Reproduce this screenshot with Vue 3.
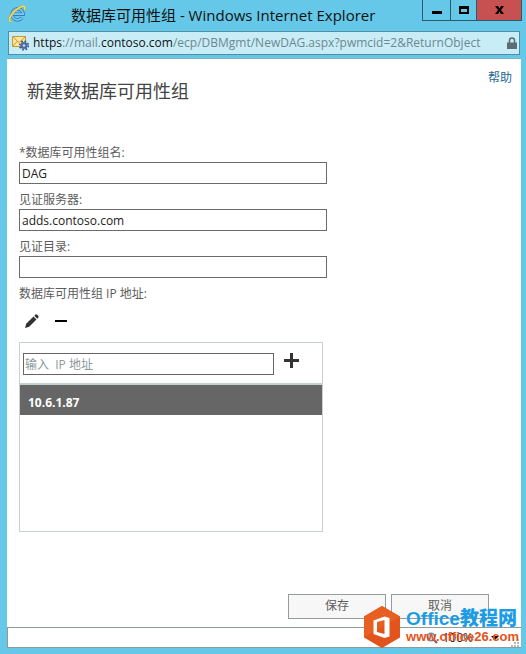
<script setup>
import { ref } from 'vue'

const groupName = ref('DAG')
const witnessServer = ref('adds.contoso.com')
const witnessDirectory = ref('')
const newAddress = ref('')
const addresses = ref(['10.6.1.87'])
const selected = ref(0)

function addAddress() {
  const value = newAddress.value.trim()
  if (value) {
    addresses.value.push(value)
    newAddress.value = ''
  }
}

function removeAddress() {
  addresses.value.splice(selected.value, 1)
  selected.value = 0
}

function editAddress() {
  newAddress.value = addresses.value[selected.value] || ''
}
</script>

<template>
  <div class="window">
    <header class="titlebar">
      <svg class="ie" viewBox="0 0 18 18" aria-hidden="true">
        <path d="M5 9.200h10.200a5.600 5.600 0 1 0-1.200 3.600" fill="none" stroke="#2f7fb8" stroke-width="3.400" />
        <path d="M5 9.200h10.200a5.600 5.600 0 1 0-1.200 3.600" fill="none" stroke="#7fcbf0" stroke-width="1.800" />
        <path d="M3.600 16.200C.6 17.400.600 13.500 4 9 8 3.800 14.500.200 16.400 1.600c.9.700.5 2.200-.2 3.500" fill="none" stroke="#b89a34" stroke-width="2.200" />
        <path d="M3.600 16.200C.6 17.400.600 13.500 4 9 8 3.800 14.500.200 16.400 1.600c.9.700.5 2.200-.2 3.500" fill="none" stroke="#f0dc6c" stroke-width="1.400" />
      </svg>
      <h1 class="caption">数据库可用性组 - Windows Internet Explorer</h1>
      <div class="controls">
        <button class="ctl min" type="button" aria-label="Minimize">
          <svg viewBox="0 0 12 12"><path d="M1 7h10v3H1z" /></svg>
        </button>
        <button class="ctl max" type="button" aria-label="Maximize">
          <svg viewBox="0 0 12 12"><path d="M1 2h10v8H1zM3 5v3h6V5z" fill-rule="evenodd" /></svg>
        </button>
        <button class="ctl close" type="button" aria-label="Close">
          <svg viewBox="0 0 12 12"><path d="M2 2h3l1.500 2.500L8 2h3L8 6l3 4H8L6.500 7.500 5 10H2l3-4z" /></svg>
        </button>
      </div>
    </header>

    <div class="address">
      <svg class="site" viewBox="0 0 18 16" aria-hidden="true">
        <path d="M.5 1.500h13v10H.5z" fill="#fbe79a" stroke="#c9983a" />
        <path d="M1 2l6 5.500L13 2M1 11l4.500-5M13 11L8.500 6" fill="none" stroke="#c9983a" />
        <circle cx="12" cy="10.500" r="3.600" fill="#4c6aa8" />
        <circle cx="12" cy="10.500" r="4.300" fill="none" stroke="#38508c" stroke-width="1.600" stroke-dasharray="1.700 1.680" />
        <circle cx="12" cy="10.500" r="1.300" fill="#c4d6f2" />
      </svg>
      <span class="url"><b>https</b>://mail.<b>contoso.com</b>/ecp/DBMgmt/NewDAG.aspx?pwmcid=2&amp;ReturnObject</span>
      <svg class="lock" viewBox="0 0 10 13" aria-hidden="true">
        <path d="M2.500 6V3.500a2.500 2.500 0 0 1 5 0V6" fill="none" stroke="#5b6e76" stroke-width="1.600" />
        <path d="M0 5.500h10V12H0z" fill="#5b6e76" />
      </svg>
    </div>

    <main class="page">
      <div class="heading">
        <h2>新建数据库可用性组</h2>
        <a class="help" href="#help">帮助</a>
      </div>

      <form class="form" @submit.prevent>
        <label for="name">*数据库可用性组名:</label>
        <input id="name" v-model="groupName" class="field" type="text">
        <label for="server">见证服务器:</label>
        <input id="server" v-model="witnessServer" class="field" type="text">
        <label for="directory">见证目录:</label>
        <input id="directory" v-model="witnessDirectory" class="field" type="text">
        <label for="ip">数据库可用性组 IP 地址:</label>

        <div class="tools">
          <button type="button" aria-label="编辑" @click="editAddress">
            <svg viewBox="0 0 14 14"><path d="M0 14l1.200-4.200L8.500 2.500l3 3-7.300 7.300zM9.300 1.700L10.500.500Q11.200 0 12 .6L13.400 2q.6.700 0 1.500l-1.200 1.200z" fill="#333" /></svg>
          </button>
          <button type="button" aria-label="删除" @click="removeAddress">
            <svg viewBox="0 0 14 14"><path d="M1 6h12v2H1z" fill="#000" /></svg>
          </button>
        </div>

        <div class="list">
          <div class="entry">
            <input id="ip" v-model="newAddress" type="text" placeholder="输入  IP 地址">
            <button type="button" aria-label="添加" @click="addAddress">
              <svg viewBox="0 0 15 15"><path d="M6 0h3v6h6v3H9v6H6V9H0V6h6z" fill="#333" /></svg>
            </button>
          </div>
          <ul>
            <li
              v-for="(address, i) in addresses"
              :key="i"
              :class="{ selected: i === selected }"
              @click="selected = i"
            >{{ address }}</li>
          </ul>
        </div>

        <div class="actions">
          <button type="submit">保存</button>
          <button type="button">取消</button>
        </div>
      </form>
    </main>

    <footer class="status">
      <svg class="magnifier" viewBox="0 0 12 12" aria-hidden="true">
        <path d="M7 7l4 4" stroke="#7a6a68" stroke-width="2.400" />
        <circle cx="5" cy="5" r="3.800" fill="#b9dcf5" stroke="#6f8fae" stroke-width="1.400" />
      </svg>
      <span>100%</span>
      <svg class="arrow" viewBox="0 0 8 4" aria-hidden="true"><path d="M0 0h8L4 4z" /></svg>
      <svg class="grip" viewBox="0 0 8 8" aria-hidden="true"><path d="M6 0h2v2H6zM3 3h2v2H3zM6 3h2v2H6zM0 6h2v2H0zM3 6h2v2H3zM6 6h2v2H6z" fill="#b4bcc0" /></svg>
    </footer>

    <div class="brand">
      <svg viewBox="0 0 36 42" aria-hidden="true">
        <path d="M18 0l18 10.500v21L18 42 0 31.500v-21z" fill="#e2541b" />
        <path d="M18 0l18 10.500L0 31.500v-21z" fill="#e85f22" />
        <path d="M9.500 14.500L20.500 10.500l5 1.500v18.500l-5 1.500-11-4zM13 16v10l7.500 2V14z" fill="#fff" fill-rule="evenodd" />
      </svg>
      <div class="brand-text">
        <strong>Office教程网</strong>
        <span>www.office26.com</span>
      </div>
    </div>
  </div>
</template>

<style>
body {
  background: #66c8e8;
}
</style>

<style scoped>
* {
  box-sizing: border-box;
}

.window {
  position: relative;
  display: flex;
  flex-direction: column;
  min-height: 100vh;
  padding: 0 5px 6px 7px;
  background: #66c8e8;
  color: #5c5c5c;
  font: 12px/16px "Open Sans", "Noto Sans CJK SC", sans-serif;
}

button,
input {
  margin: 0;
  font: inherit;
  color: inherit;
}

button {
  padding: 0;
  border: 0;
  background: none;
}

.titlebar {
  display: flex;
  align-items: flex-start;
  height: 31px;
}

.ie {
  width: 18px;
  height: 18px;
  margin: 5px 0 0 1px;
}

.caption {
  flex: 1;
  margin: 3px 0 0 45px;
  color: #111;
  font-size: 15px;
  font-weight: 400;
  line-height: 24px;
  white-space: nowrap;
}

.controls {
  display: flex;
  height: 21px;
  margin-right: -1px;
  border: 1px solid #2c5b6b;
  border-top: 0;
}

.ctl {
  display: flex;
  align-items: center;
  justify-content: center;
  width: 27px;
}

.ctl svg {
  width: 12px;
  height: 12px;
}

.max {
  border: solid #2c5b6b;
  border-width: 0 1px;
}

.close {
  width: 44px;
  background: #c75050;
}

.address {
  display: flex;
  align-items: center;
  height: 24px;
  margin: 0 1px;
  padding: 0 2px 0 3px;
  border: 1px solid #4f8ea5;
  background: #c8edf7;
}

.site {
  flex: none;
  width: 18px;
  height: 16px;
  margin-right: 3px;
}

.url {
  flex: 1;
  overflow: hidden;
  color: #6e8790;
  font-size: 12px;
  line-height: 20px;
  white-space: nowrap;
}

.url b {
  color: #111;
  font-weight: 400;
}

.lock {
  flex: none;
  width: 10px;
  height: 13px;
}

.page {
  flex: 1;
  margin-top: 3px;
  padding: 8px 9px 8px 12px;
  border-top: 1px solid #7fb4c6;
  background: #fff;
}

.heading {
  display: flex;
  align-items: flex-start;
  justify-content: space-between;
  height: 77px;
}

h2 {
  margin: 12px 0 0 8px;
  color: #444;
  font-size: 18px;
  font-weight: 400;
  line-height: 24px;
}

.help {
  margin-top: 3px;
  color: #1c6a94;
  text-decoration: none;
}

.form {
  display: flex;
  flex-direction: column;
  align-items: flex-start;
}

label {
  line-height: 18px;
}

.field {
  width: 100%;
  max-width: 308px;
  height: 22px;
  margin-bottom: 7px;
  padding: 0 2px;
  border: 1px solid #6b6b6b;
  background: #fff;
  color: #222;
}

.tools {
  display: flex;
  gap: 15px;
  height: 39px;
  padding: 11px 6px 0;
}

.tools button,
.tools svg {
  display: block;
  width: 14px;
  height: 14px;
}

.list {
  width: 100%;
  max-width: 304px;
  min-height: 190px;
  border: 1px solid #c8cfd1;
}

.entry {
  display: flex;
  align-items: flex-start;
  gap: 10px;
  height: 42px;
  padding: 10px 23px 0 3px;
  border-bottom: 2px solid #c8cfd1;
}

.entry input {
  flex: 1;
  min-width: 0;
  height: 22px;
  padding: 0 1px;
  border: 1px solid #666;
  background: #fff;
}

.entry input::placeholder {
  color: #8d9999;
  opacity: 1;
  white-space: pre;
}

.entry button,
.entry svg {
  display: block;
  width: 15px;
  height: 15px;
}

ul {
  margin: 0;
  padding: 0;
  list-style: none;
}

li {
  padding: 10px 8px 4px;
}

.selected {
  background: #666;
  color: #fff;
  font-weight: 700;
}

.actions {
  display: flex;
  align-self: flex-end;
  gap: 5px;
  margin: 62px 23px 0 0;
}

.actions button {
  width: 98px;
  height: 25px;
  padding-bottom: 2px;
  border: 1px solid #969b9c;
  background: #f7f7f7;
}

.status {
  display: flex;
  align-items: center;
  justify-content: flex-end;
  height: 21px;
  padding-right: 2px;
  border: solid #8f989b;
  border-width: 1px 0 1px 1px;
  background: #fff;
  color: #222;
}

.magnifier {
  width: 12px;
  height: 12px;
  margin-right: 4px;
}

.arrow {
  width: 8px;
  height: 4px;
  margin: 0 12px 0 18px;
}

.grip {
  align-self: flex-end;
  width: 8px;
  height: 8px;
}

/* Site badge laid over the lower right corner of the window */
.brand {
  position: absolute;
  right: 7px;
  bottom: 6px;
  display: flex;
  align-items: center;
  gap: 6px;
}

.brand svg {
  width: 36px;
  height: 42px;
}

.brand-text {
  display: flex;
  flex-direction: column;
  font-family: "Liberation Sans", "Noto Sans CJK SC", sans-serif;
  font-weight: 700;
  white-space: nowrap;
}

.brand-text strong {
  color: #1c9ce4;
  font-size: 19px;
  line-height: 20px;
}

.brand-text span {
  color: #e2541b;
  font-size: 13px;
  line-height: 16px;
}
</style>
